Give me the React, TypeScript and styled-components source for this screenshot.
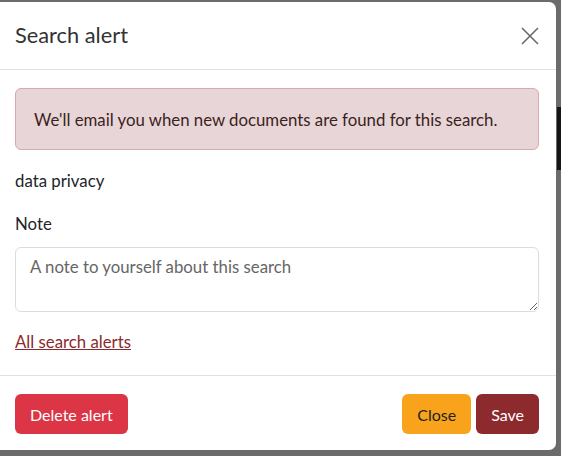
import React from "react";
import styled, { createGlobalStyle } from "styled-components";

const Global = createGlobalStyle`
  html, body { margin: 0; padding: 0; }
  body {
    background: #6b6b6b;
    font-family: Lato, "Open Sans", sans-serif;
    color: #212529;
    width: 561px;
    height: 456px;
    overflow: hidden;
  }
  * { box-sizing: border-box; }
`;

const Page = styled.div`
  display: flex;
  align-items: flex-start;
  height: 456px;
`;

const Modal = styled.div`
  width: 556px;
  margin-top: 2px;
  background: #fff;
  border-radius: 0 7px 7px 0;
  display: flex;
  flex-direction: column;
`;

const Behind = styled.div`
  flex: 1;
  margin-top: 107px;
  height: 63px;
  background: #151515;
  margin-left: 1px;
`;

const Header = styled.div`
  display: flex;
  align-items: center;
  justify-content: space-between;
  height: 68px;
  padding: 0 16px 0 15px;
  border-bottom: 1px solid #dee2e6;
`;

const Title = styled.h5`
  margin: 0 0 1px 0;
  font-size: 21.8px;
  font-weight: 400;
  color: #333;
  line-height: 1.4;
`;

const CloseX = styled.button`
  border: none;
  background: transparent;
  padding: 0;
  width: 20px;
  height: 20px;
  display: flex;
  align-items: center;
  justify-content: center;
  cursor: pointer;
`;

const Body = styled.div`
  padding: 18px 17px 0 15px;
  display: flex;
  flex-direction: column;
  font-size: 16.8px;
`;

const Alert = styled.div`
  background: #e8d5d7;
  border: 1px solid #d8a9ad;
  border-radius: 6px;
  padding: 0 18px;
  height: 62px;
  display: flex;
  align-items: center;
  color: #3b1f21;
`;

const Query = styled.div`
  margin-top: 19px;
  line-height: 24px;
`;

const Label = styled.label`
  margin-top: 19px;
  line-height: 24px;
`;

const Note = styled.textarea`
  margin-top: 11px;
  height: 65px;
  width: 100%;
  border: 1px solid #dcdcdf;
  border-radius: 6px;
  padding: 7px 14px;
  font-family: Lato, "Open Sans", sans-serif;
  font-size: 16.8px;
  line-height: 24px;
  resize: vertical;
  &::placeholder { color: #666; }
`;

const Link = styled.a`
  margin-top: 18px;
  line-height: 24px;
  color: #8b2a2e;
  text-decoration: underline;
  align-self: flex-start;
  cursor: pointer;
`;

const Footer = styled.div`
  margin-top: 21px;
  border-top: 1px solid #dee2e6;
  padding: 18px 17px 16px 15px;
  display: flex;
  justify-content: space-between;
  align-items: center;
`;

const Group = styled.div`
  display: flex;
  gap: 5px;
`;

const Btn = styled.button<{ $bg: string; $fg: string }>`
  height: 40px;
  padding: 0 15px;
  border: none;
  border-radius: 6px;
  background: ${(p) => p.$bg};
  color: ${(p) => p.$fg};
  font-family: Lato, "Open Sans", sans-serif;
  font-size: 16px;
  cursor: pointer;
`;

export default function App() {
  return (
    <>
      <Global />
      <Page>
        <Modal>
          <Header>
            <Title>Search alert</Title>
            <CloseX aria-label="Close">
              <svg width="20" height="20" viewBox="0 0 20 20">
                <path d="M2 2 L18 18 M18 2 L2 18" stroke="#6a6a6a" strokeWidth="1.6" fill="none" />
              </svg>
            </CloseX>
          </Header>
          <Body>
            <Alert>We'll email you when new documents are found for this search.</Alert>
            <Query>data privacy</Query>
            <Label>Note</Label>
            <Note placeholder="A note to yourself about this search" />
            <Link>All search alerts</Link>
          </Body>
          <Footer>
            <Btn $bg="#dc3546" $fg="#fff">Delete alert</Btn>
            <Group>
              <Btn $bg="#f9a31c" $fg="#222">Close</Btn>
              <Btn $bg="#8d2a2e" $fg="#fff">Save</Btn>
            </Group>
          </Footer>
        </Modal>
        <Behind />
      </Page>
    </>
  );
}
